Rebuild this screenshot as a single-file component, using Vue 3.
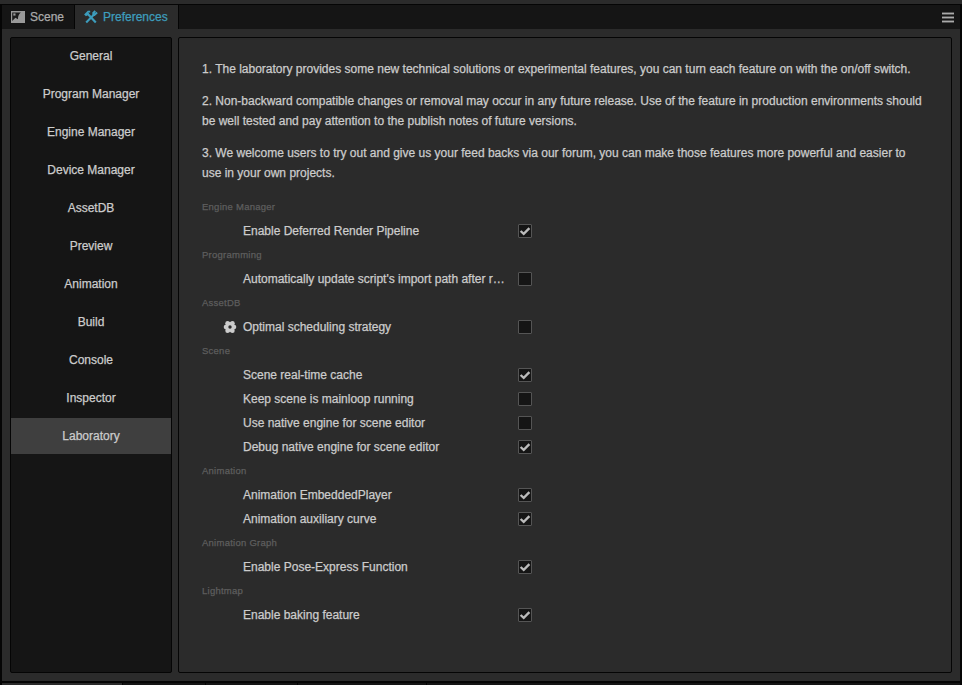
<script setup>
import { ref } from 'vue'

const pages = ['General', 'Program Manager', 'Engine Manager', 'Device Manager', 'AssetDB', 'Preview', 'Animation', 'Build', 'Console', 'Inspector', 'Laboratory']
const current = ref('Laboratory')

const notes = [
  '1. The laboratory provides some new technical solutions or experimental features, you can turn each feature on with the on/off switch.',
  '2. Non-backward compatible changes or removal may occur in any future release. Use of the feature in production environments should be well tested and pay attention to the publish notes of future versions.',
  '3. We welcome users to try out and give us your feed backs via our forum, you can make those features more powerful and easier to use in your own projects.',
]

const groups = ref([
  { title: 'Engine Manager', items: [{ label: 'Enable Deferred Render Pipeline', on: true }] },
  { title: 'Programming', items: [{ label: "Automatically update script's import path after r…", on: false }] },
  { title: 'AssetDB', items: [{ label: 'Optimal scheduling strategy', on: false, gear: true }] },
  {
    title: 'Scene',
    items: [
      { label: 'Scene real-time cache', on: true },
      { label: 'Keep scene is mainloop running', on: false },
      { label: 'Use native engine for scene editor', on: false },
      { label: 'Debug native engine for scene editor', on: true },
    ],
  },
  {
    title: 'Animation',
    items: [
      { label: 'Animation EmbeddedPlayer', on: true },
      { label: 'Animation auxiliary curve', on: true },
    ],
  },
  { title: 'Animation Graph', items: [{ label: 'Enable Pose-Express Function', on: true }] },
  { title: 'Lightmap', items: [{ label: 'Enable baking feature', on: true }] },
])
</script>

<template>
  <div class="window">
    <header class="tabs">
      <div class="tab scene">
        <svg class="scene-icon" width="14" height="12" viewBox="0 0 14 12">
          <path fill="#999" d="M0 0H14V12H0Z" />
          <path fill="#1b1b1b" d="M1.2 1.5H9.8C7.9 3 7 5.2 6.9 8.2L4.4 6.7L1.2 10Z" />
          <path fill="#999" d="M2.3 2.4H4.5V4.6H2.3Z" />
        </svg>
        <span>Scene</span>
      </div>
      <div class="tab active">
        <svg class="tools-icon" width="14" height="14" viewBox="0 0 14 14" fill="none" stroke="#3d9dbd">
          <path stroke-width="2.2" d="M3.4 3.6L11.8 12.6" />
          <path stroke-width="2.1" d="M2.2 12.4L9.8 4.8" />
          <path stroke-width="1.9" d="M.8 5.2L4.2 1.6H6.2M1.4 5.3L4.8 3.6" />
          <path stroke-width="2" d="M11.2 .8L9.3 3L10.8 4.6L13.1 2.6M9.4 3V5H11.6" />
        </svg>
        <span>Preferences</span>
      </div>
      <svg class="menu" width="12" height="11" viewBox="0 0 12 11">
        <path fill="#555" d="M0 0H12V3H0ZM0 4H12V7H0ZM0 8H12V11H0Z" />
        <path fill="#aaa" d="M0 1H12V2H0ZM0 5H12V6H0ZM0 9H12V10H0Z" />
      </svg>
    </header>
    <main class="body">
      <nav class="sidebar">
        <div v-for="p in pages" :key="p" class="page" :class="{ selected: p === current }" @click="current = p">{{ p }}</div>
      </nav>
      <section class="panel">
        <p v-for="n in notes" :key="n" class="note">{{ n }}</p>
        <div class="groups">
          <template v-for="g in groups" :key="g.title">
            <div class="title">{{ g.title }}</div>
            <div v-for="item in g.items" :key="item.label" class="row">
              <span class="lead">
                <svg v-if="item.gear" width="12" height="12" viewBox="0 0 12 12">
                  <g fill="#ccc">
                    <circle cx="3.6" cy="2.3" r="2.3" />
                    <circle cx="8.4" cy="2.3" r="2.3" />
                    <circle cx="2" cy="6" r="2.3" />
                    <circle cx="10" cy="6" r="2.3" />
                    <circle cx="3.6" cy="9.7" r="2.3" />
                    <circle cx="8.4" cy="9.7" r="2.3" />
                    <circle cx="6" cy="6" r="5" />
                  </g>
                  <circle cx="6" cy="6" r="1.7" fill="#2b2b2b" />
                </svg>
              </span>
              <span class="label">{{ item.label }}</span>
              <span class="check" @click="item.on = !item.on">
                <svg v-if="item.on" width="12" height="12" viewBox="0 0 12 12">
                  <path fill="none" stroke="#bbb" stroke-width="2.3" d="M1.6 6L4.7 8.9L10.4 3.1" />
                </svg>
              </span>
            </div>
          </template>
        </div>
      </section>
    </main>
    <footer class="dock">
      <i class="dock-tab first"></i>
      <i class="dock-tab second"></i>
      <i class="dock-tab third"></i>
      <i class="dock-tab fourth"></i>
      <i class="dock-rest"></i>
    </footer>
  </div>
</template>

<style>
body {
  background: #050505;
  overflow: hidden;
}
</style>

<style scoped>
* {
  box-sizing: border-box;
}
.window {
  width: 962px;
  height: 685px;
  display: flex;
  flex-direction: column;
  padding: 0 2px;
  border-top: 4px solid #2b2b2b;
  background: #050505;
  font: 12px/20px "Liberation Sans", Arial, sans-serif;
  -webkit-text-stroke: 0.25px currentColor;
  color: #ccc;
}
.tabs {
  height: 25px;
  flex: none;
  display: flex;
  background: #151515;
  border-top: 1px solid #050505;
}
.tab {
  display: flex;
  align-items: center;
  height: 24px;
  border-right: 1px solid #050505;
  color: #aaa;
}
.scene {
  width: 73px;
  padding-left: 9px;
  gap: 5px;
}
.active {
  width: 104px;
  padding-left: 9px;
  gap: 5px;
  background: #2b2b2b;
  color: #3d9dbd;
}
.menu {
  margin: 7px 6px 0 auto;
}
.body {
  height: 652px;
  flex: none;
  display: flex;
  gap: 6px;
  padding: 8px;
  background: #2b2b2b;
}
.sidebar,
.panel {
  border: 1px solid #050505;
  border-radius: 2px;
}
.sidebar {
  width: 162px;
  display: flex;
  flex-direction: column;
  gap: 2px;
  background: #151515;
}
.page {
  height: 36px;
  line-height: 36px;
  text-align: center;
}
.selected {
  background: #3f3f3f;
}
.panel {
  flex: 1;
  padding: 21px 23px 0;
}
.note {
  margin: 0 0 12px;
}
.title {
  height: 24px;
  line-height: 24px;
  font-size: 9.5px;
  letter-spacing: 0.25px;
  color: #5e5e5e;
}
.row {
  height: 24px;
  display: flex;
  align-items: center;
}
.lead {
  width: 41px;
  height: 12px;
  padding-left: 22px;
  flex: none;
}
.lead svg,
.check svg {
  display: block;
  overflow: visible;
}
.label {
  width: 262px;
  margin-right: 13px;
  white-space: nowrap;
}
.check {
  width: 14px;
  height: 14px;
  border: 1px solid #555;
  border-radius: 1px;
  background: #151515;
}
.dock {
  flex: 1;
  display: flex;
  gap: 1px;
  padding-top: 2px;
}
.dock-tab,
.dock-rest {
  background: #151515;
}
.first {
  width: 120px;
  background: #2b2b2b;
}
.second {
  width: 82px;
}
.third {
  width: 91px;
}
.fourth {
  width: 128px;
}
.dock-rest {
  flex: 1;
}
</style>
